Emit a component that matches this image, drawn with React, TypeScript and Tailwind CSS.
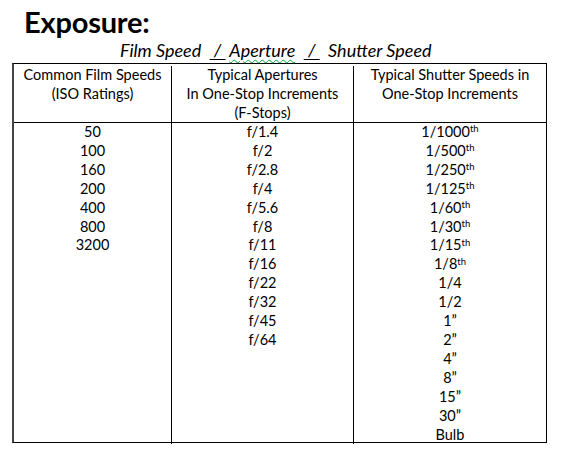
const isoSpeeds = ['50', '100', '160', '200', '400', '800', '3200']
const apertures = ['f/1.4', 'f/2', 'f/2.8', 'f/4', 'f/5.6', 'f/8', 'f/11', 'f/16', 'f/22', 'f/32', 'f/45', 'f/64']
const shutter: [string, boolean][] = [
  ['1/1000', true], ['1/500', true], ['1/250', true], ['1/125', true], ['1/60', true], ['1/30', true],
  ['1/15', true], ['1/8', true], ['1/4', false], ['1/2', false], ['1\u201D', false], ['2\u201D', false],
  ['4\u201D', false], ['8\u201D', false], ['15\u201D', false], ['30\u201D', false], ['Bulb', false],
]

function Col({ children, className = '' }: { children: React.ReactNode; className?: string }) {
  return <div className={`flex flex-col items-center ${className}`}>{children}</div>
}

export default function App() {
  return (
    <div className="w-[565px] h-[450px] bg-white text-black font-['Lato','Open_Sans',sans-serif] overflow-hidden">
      <h1 className="pl-[24px] pt-[6px] text-[29px] font-bold leading-[31px] tracking-[-0.2px]">Exposure:</h1>
      <div className="pl-[120px] mt-[3px] text-[18px] italic leading-[20px] whitespace-pre">
        {'Film Speed  '}<span className="underline underline-offset-2">{' / '}</span>{' '}<span className="underline decoration-wavy decoration-green-600 decoration-1 underline-offset-2">Aperture</span>{'  '}<span className="underline underline-offset-2">{' / '}</span>{'  Shutter Speed'}
      </div>
      <div className="ml-[12px] mt-[3px] w-[535px] h-[380px] border-t-[1.5px] border-r-[1.5px] border-b-[1.5px] border-l-[2.5px] border-t-black border-r-black border-b-black border-l-[#444] text-[14.5px] leading-[18.9px] flex flex-col">
        <div className="grid grid-cols-[158px_182px_1fr] h-[59px] border-b border-black pt-[2px] text-center">
          <div className="border-r border-black">Common Film Speeds<br />(ISO Ratings)</div>
          <div className="border-r border-black">Typical Apertures<br />In One-Stop Increments<br />(F-Stops)</div>
          <div>Typical Shutter Speeds in<br />One-Stop Increments</div>
        </div>
        <div className="grid grid-cols-[158px_182px_1fr] flex-1">
          <Col className="border-r border-black">
            {isoSpeeds.map(s => <div key={s}>{s}</div>)}
          </Col>
          <Col className="border-r border-black">
            {apertures.map(a => <div key={a}>{a}</div>)}
          </Col>
          <Col>
            {shutter.map(([v, th]) => (
              <div key={v}>
                {v}
                {th && <sup className="text-[9.5px]">th</sup>}
              </div>
            ))}
          </Col>
        </div>
      </div>
    </div>
  )
}
